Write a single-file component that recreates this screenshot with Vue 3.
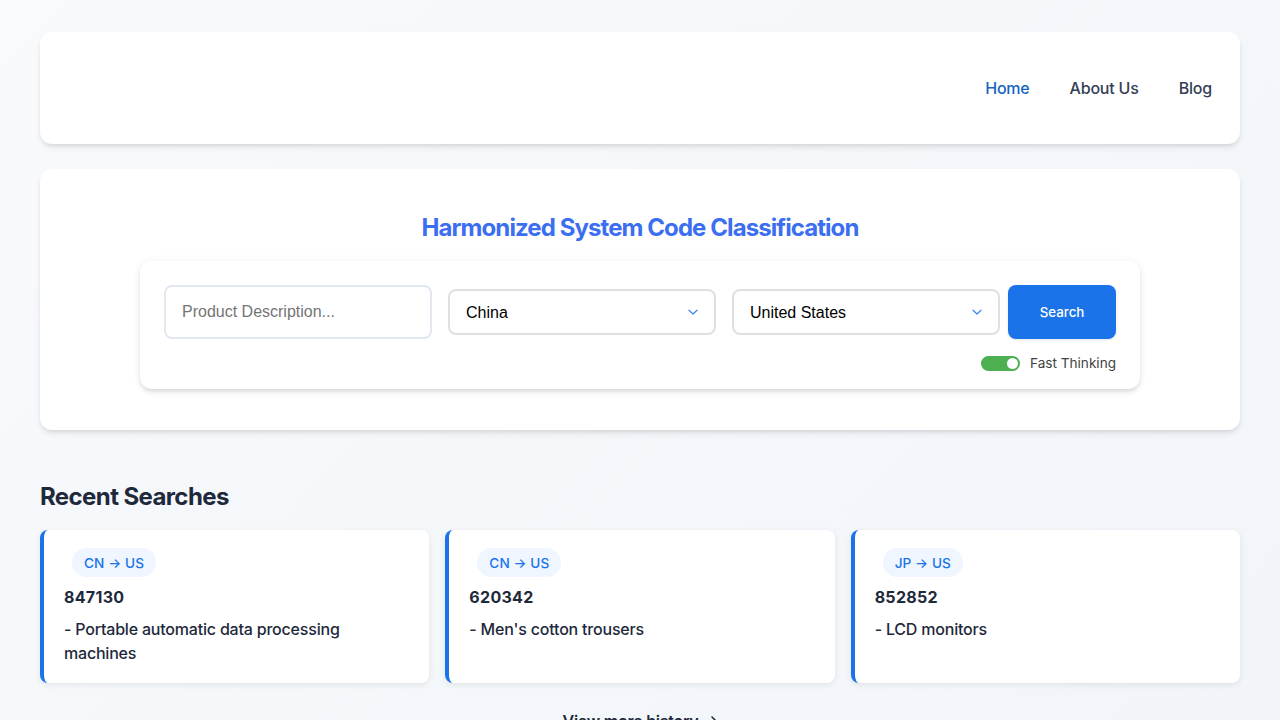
<template>
  <div class="page">
    <header class="navbar">
      <nav class="nav-links">
        <a
          v-for="link in links"
          :key="link.label"
          href="#"
          :class="['nav-link', { active: link.active }]"
        >{{ link.label }}</a>
      </nav>
    </header>

    <section class="hero">
      <h1 class="hero-title">Harmonized System Code Classification</h1>
      <div class="search-panel">
        <div class="search-row">
          <input class="search-input" type="text" placeholder="Product Description...">
          <div v-for="(select, index) in selects" :key="index" class="select-wrap">
            <select v-model="select.value" class="country-select">
              <option v-for="country in countries" :key="country" :value="country">{{ country }}</option>
            </select>
            <svg class="chevron" viewBox="0 0 12 12" width="12" height="12" fill="none">
              <path d="M2 4.25L6 8l4-3.75" stroke="#3b82f6" stroke-width="1.2" stroke-linecap="round" stroke-linejoin="round" />
            </svg>
          </div>
          <button class="search-button">Search</button>
        </div>
        <div class="options-row">
          <button :class="['toggle', { on: fastThinking }]" @click="fastThinking = !fastThinking">
            <span class="toggle-knob"></span>
          </button>
          <span class="toggle-label">Fast Thinking</span>
        </div>
      </div>
    </section>

    <section class="recent">
      <h2 class="recent-title">Recent Searches</h2>
      <div class="recent-grid">
        <article v-for="item in recent" :key="item.code" class="recent-card">
          <span class="route-tag">{{ item.route }}</span>
          <div class="recent-code">{{ item.code }}</div>
          <p class="recent-desc">{{ item.desc }}</p>
        </article>
      </div>
      <a href="#" class="more-link">
        View more history
        <svg viewBox="0 0 12 12" width="12" height="12" fill="none">
          <path d="M4 2l4 4-4 4" stroke="#1e293b" stroke-width="1.6" stroke-linecap="round" stroke-linejoin="round" />
        </svg>
      </a>
    </section>
  </div>
</template>

<script setup>
import { ref, reactive } from 'vue'

const links = [
  { label: 'Home', active: true },
  { label: 'About Us' },
  { label: 'Blog' }
]

const countries = ['China', 'United States', 'Japan']
const selects = reactive([{ value: 'China' }, { value: 'United States' }])
const fastThinking = ref(true)

const recent = [
  { route: 'CN → US', code: '847130', desc: '- Portable automatic data processing machines' },
  { route: 'CN → US', code: '620342', desc: "- Men's cotton trousers" },
  { route: 'JP → US', code: '852852', desc: '- LCD monitors' }
]
</script>

<style>
html,
body {
  margin: 0;
  overflow: hidden;
}
</style>

<style scoped>
.page {
  box-sizing: border-box;
  min-height: 720px;
  padding: 32px 40px;
  background: linear-gradient(135deg, #f8fafc 0%, #f1f5f9 100%);
  font-family: Inter, "Liberation Sans", sans-serif;
  color: #1e293b;
}

.navbar {
  display: flex;
  justify-content: flex-end;
  align-items: flex-start;
  height: 112px;
  box-sizing: border-box;
  padding: 44px 28px 0;
  background: #fff;
  border-radius: 12px;
  box-shadow: 0 4px 6px -1px rgba(0, 0, 0, 0.1), 0 2px 4px -1px rgba(0, 0, 0, 0.06);
}

.nav-links {
  display: flex;
  gap: 40px;
}

.nav-link {
  font-size: 16px;
  line-height: 24px;
  font-weight: 500;
  letter-spacing: -0.2px;
  color: #334155;
  text-decoration: none;
}

.nav-link.active {
  color: #1565c0;
}

.hero {
  margin-top: 25px;
  padding: 44px 100px 41px;
  background: #fff;
  border-radius: 12px;
  box-shadow: 0 4px 6px -1px rgba(0, 0, 0, 0.1), 0 2px 4px -1px rgba(0, 0, 0, 0.06);
}

.hero-title {
  margin: 0 0 18px;
  font-size: 24px;
  line-height: 30px;
  font-weight: 750;
  letter-spacing: -0.92px;
  text-align: center;
  color: #3b6ef0;
}

.search-panel {
  padding: 24px 24px 17px;
  background: #fff;
  border-radius: 12px;
  box-shadow: 0 0 10px rgba(0, 0, 0, 0.05), 0 4px 6px -1px rgba(0, 0, 0, 0.1), 0 2px 4px -1px rgba(0, 0, 0, 0.06);
}

.search-row {
  display: flex;
  align-items: center;
  gap: 16px;
}

.search-input {
  box-sizing: border-box;
  width: 268px;
  height: 54px;
  padding: 0 16px;
  border: 2px solid #e2e8f0;
  border-radius: 8px;
  outline: none;
  font-family: "Liberation Sans", sans-serif;
  font-size: 16px;
  color: #1e293b;
}

.search-input::placeholder {
  color: #757575;
}

.select-wrap {
  position: relative;
  width: 268px;
  height: 46px;
}

.country-select {
  box-sizing: border-box;
  width: 100%;
  height: 100%;
  padding: 0 16px;
  border: 2px solid #e0e0e0;
  border-radius: 8px;
  outline: none;
  appearance: none;
  background: #fff;
  font-family: "Liberation Sans", sans-serif;
  font-size: 16px;
  color: #000;
}

.chevron {
  position: absolute;
  top: 17px;
  right: 17px;
  pointer-events: none;
}

.search-button {
  box-sizing: border-box;
  width: 108px;
  height: 54px;
  margin-left: -8px;
  border: none;
  border-radius: 8px;
  background: #1a73e8;
  box-shadow: 0 1px 3px rgba(0, 0, 0, 0.1);
  font-family: Inter, sans-serif;
  font-size: 13.33px;
  font-weight: 500;
  color: #fff;
}

.options-row {
  display: flex;
  justify-content: flex-end;
  align-items: center;
  gap: 10px;
  margin-top: 15px;
  height: 18px;
}

.toggle {
  position: relative;
  width: 39px;
  height: 15px;
  padding: 0;
  border: none;
  border-radius: 8px;
  background: #cbd5e1;
}

.toggle.on {
  background: #4caf50;
}

.toggle-knob {
  position: absolute;
  top: 2px;
  left: 2px;
  width: 11px;
  height: 11px;
  border-radius: 50%;
  background: #fff;
}

.toggle.on .toggle-knob {
  left: 26px;
}

.toggle-label {
  font-size: 13.6px;
  line-height: 18px;
  color: #424242;
}

.recent {
  margin-top: 51px;
}

.recent-title {
  margin: 0 0 17px;
  font-size: 24px;
  line-height: 32px;
  font-weight: 700;
  letter-spacing: -0.6px;
  color: #1e293b;
}

.recent-grid {
  display: grid;
  grid-template-columns: repeat(3, 1fr);
  gap: 16px;
}

.recent-card {
  box-sizing: border-box;
  height: 153px;
  padding: 18px 20px 0;
  background: #fff;
  border-left: 4px solid #1a73e8;
  border-radius: 8px;
  box-shadow: 0 2px 6px rgba(0, 0, 0, 0.08);
}

.route-tag {
  display: inline-block;
  margin-left: 8px;
  padding: 0 12px;
  height: 29px;
  line-height: 30px;
  border-radius: 15px;
  background: #eff6ff;
  font-size: 13.6px;
  font-weight: 500;
  letter-spacing: 0.1px;
  color: #1a73e8;
}

.recent-code {
  margin-top: 8px;
  font-size: 16px;
  line-height: 24px;
  font-weight: 700;
  letter-spacing: 0.3px;
}

.recent-desc {
  margin: 8px 0 0;
  font-size: 16px;
  line-height: 24px;
  font-weight: 450;
  letter-spacing: -0.2px;
  color: #1e293b;
}

.more-link {
  display: flex;
  justify-content: center;
  align-items: center;
  gap: 10px;
  margin-top: 26px;
  padding-left: 3px;
  font-size: 16px;
  line-height: 24px;
  font-weight: 600;
  letter-spacing: -0.25px;
  color: #1e293b;
  text-decoration: none;
}
</style>
